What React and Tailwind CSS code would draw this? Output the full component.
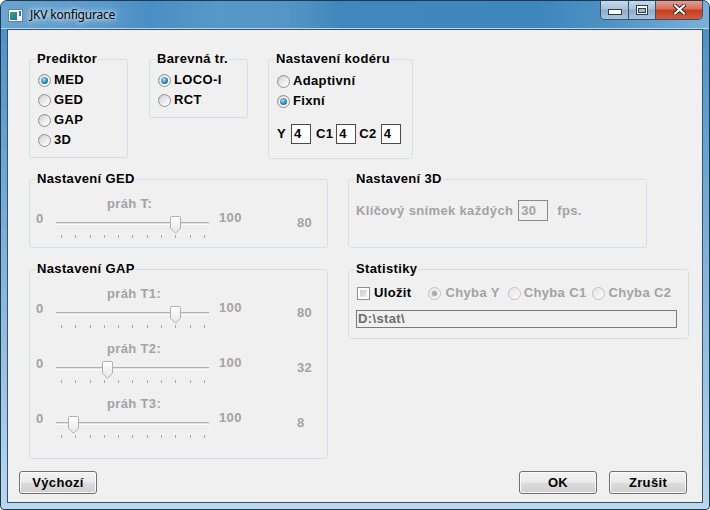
import React from "react";

const grayText = "text-[#a3a3a3]";

function Radio({ checked, disabled }) {
  return (
    <span
      className={
        disabled
          ? "flex h-[13px] w-[13px] shrink-0 items-center justify-center rounded-full border border-[#c2c2c2] bg-[linear-gradient(135deg,#e6e6e6,#fbfbfb)]"
          : "flex h-[13px] w-[13px] shrink-0 items-center justify-center rounded-full border border-[#8e8f8f] bg-[linear-gradient(135deg,#cdcdcd,#f3f3f3_65%,#ffffff)]"
      }
    >
      {checked && (
        <span
          className={
            disabled
              ? "h-[5px] w-[5px] rounded-full bg-[#a9a9a9] shadow-[0_0_0_1px_#e2e2e2]"
              : "h-[7px] w-[7px] rounded-full bg-[radial-gradient(circle_at_40%_35%,#a6e0fa,#2a86c4_55%,#0e4f82)] shadow-[0_0_0_1px_#ffffff]"
          }
        />
      )}
    </span>
  );
}

function RadioRow({ label, checked }) {
  return (
    <div className="flex h-[20px] items-center gap-[3px]">
      <Radio checked={checked} />
      <span className="text-[13px] font-bold leading-[16px]">{label}</span>
    </div>
  );
}

function Group({ title, className, children }) {
  return (
    <fieldset className={"rounded-[3px] border border-[#d5dfe5] pl-[6px] " + className}>
      <legend className="px-[1px] text-[13px] font-bold leading-[16px] text-black">{title}</legend>
      {children}
    </fieldset>
  );
}

function Thumb() {
  return (
    <svg width="11" height="18" viewBox="0 0 11 18">
      <defs>
        <linearGradient id="thumbFill" x1="0" y1="0" x2="0" y2="1">
          <stop offset="0" stopColor="#ffffff" />
          <stop offset="1" stopColor="#e6e6e6" />
        </linearGradient>
      </defs>
      <path
        d="M1.8,0.5 H9.2 Q10.5,0.5 10.5,1.8 V12.3 L5.5,17.3 L0.5,12.3 V1.8 Q0.5,0.5 1.8,0.5 Z"
        fill="url(#thumbFill)"
        stroke="#b1b1b1"
      />
    </svg>
  );
}

function Slider({ label, value }) {
  const ticks = Array.from({ length: 11 }, (_, i) => i);
  return (
    <div className={"h-[55px] text-[13px] font-bold " + grayText}>
      <div className="pl-[71px] leading-[14px]">{label}</div>
      <div className="flex items-start">
        <span className="mt-[1px] w-[20px] leading-[13px]">0</span>
        <div className="relative h-[28px] w-[153px]">
          <div className="mt-[11px] h-[3px] border-y border-t-[#b0b0b0] border-b-[#fbfbfb] bg-[#e2e2e2]" />
          <div className="mt-[10px] flex h-[3px] justify-between pl-[5px] pr-[4px]">
            {ticks.map((t) => (
              <span key={t} className="h-[3px] w-[1px] bg-[#a8a8a8]" />
            ))}
          </div>
          <div className="absolute top-[5px]" style={{ left: Math.round(0.2 + 1.426 * value) }}>
            <Thumb />
          </div>
        </div>
        <span className="ml-[10px] w-[78px] leading-[13px]">100</span>
        <span className="mt-[5px] leading-[13px]">{value}</span>
      </div>
    </div>
  );
}

function Button({ children, className = "" }) {
  return (
    <button
      type="button"
      className={
        "h-[23px] w-[78px] rounded-[3px] border border-[#707070] bg-[linear-gradient(#f2f2f2_0%,#ebebeb_48%,#dddddd_52%,#cfcfcf_100%)] text-[13px] font-bold leading-[16px] text-black shadow-[inset_0_0_0_1px_#fbfbfb] " +
        className
      }
    >
      {children}
    </button>
  );
}

function SmallBox({ value }) {
  return (
    <span className="flex h-[20px] w-[20px] items-center border border-[#4b4b4b] bg-white pl-[2px] text-[13px] font-bold leading-[16px]">
      {value}
    </span>
  );
}

function WindowButtons() {
  return (
    <div className="-mt-[1px] mr-[6px] ml-auto flex h-[20px] overflow-hidden rounded-b-[5px] border border-t-0 border-[#3a5268]">
      <div className="flex w-[28px] items-center justify-center border-r border-[#3a5268] bg-[linear-gradient(#c9dcec_0%,#aac4dc_45%,#8cacca_55%,#a7c5df_100%)]">
        <svg width="14" height="6" viewBox="0 0 14 6" className="mt-[5px]">
          <rect x="0.5" y="0.5" width="13" height="5" fill="#ffffff" stroke="#2c3e50" />
        </svg>
      </div>
      <div className="flex w-[27px] items-center justify-center border-r border-[#3a5268] bg-[linear-gradient(#c9dcec_0%,#aac4dc_45%,#8cacca_55%,#a7c5df_100%)]">
        <svg width="12" height="10" viewBox="0 0 12 10">
          <rect x="0.5" y="0.5" width="11" height="9" fill="#ffffff" stroke="#2c3e50" />
          <rect x="2.5" y="3.5" width="7" height="4" fill="#9cb9d3" stroke="#2c3e50" />
        </svg>
      </div>
      <div className="flex w-[46px] items-center justify-center bg-[linear-gradient(#e8a493_0%,#d8705a_45%,#c6401f_55%,#d45a3c_100%)]">
        <svg width="13" height="11" viewBox="0 0 13 11">
          <path d="M2,1.5 L11,9.5 M11,1.5 L2,9.5" stroke="#3a2a2a" strokeWidth="4" strokeLinecap="square" />
          <path d="M2,1.5 L11,9.5 M11,1.5 L2,9.5" stroke="#ffffff" strokeWidth="2" strokeLinecap="square" />
        </svg>
      </div>
    </div>
  );
}

function AppIcon() {
  return (
    <svg width="15" height="13" viewBox="0 0 15 13" className="mt-[8px] ml-[7px] shrink-0">
      <defs>
        <linearGradient id="iconFill" x1="0" y1="0" x2="1" y2="1">
          <stop offset="0" stopColor="#3aa56a" />
          <stop offset="1" stopColor="#1f6fb0" />
        </linearGradient>
      </defs>
      <rect x="0.5" y="0.5" width="14" height="12" fill="#f4f4f4" stroke="#6f7f8e" />
      <rect x="2" y="3" width="7" height="8" fill="url(#iconFill)" />
      <rect x="11" y="2" width="2" height="5" fill="#2d73c4" />
    </svg>
  );
}

export default function App() {
  return (
    <div className="h-[510px] w-[710px] overflow-hidden rounded-t-[7px] rounded-b-[4px] border border-[#1f3a50] bg-[linear-gradient(#4a8ec2_0%,#6aa4d2_30%,#9cc3e3_75%,#bcd7ee_100%)] font-['Liberation_Sans',Arial,sans-serif] tracking-[0.35px] text-black">
      {/* title bar */}
      <div className="flex h-[28px] items-start bg-[linear-gradient(90deg,#6aa4d0_0%,#5b9acb_14%,#4a8fc3_21%,#5698c7_30%,#5596c6_40%,#4187bc_48%,#3f86bb_76%,#4f92c4_86%,#79b1da_100%)] shadow-[inset_0_-1px_0_#bcd6ea]">
        <AppIcon />
        <span className="mt-[6px] ml-[7px] font-['Noto_Sans',sans-serif] text-[12px] leading-[16px] tracking-[-0.2px] [text-shadow:0_0_8px_#ffffff,0_0_4px_#ffffff]">
          JKV konfigurace
        </span>
        <WindowButtons />
      </div>

      {/* client area */}
      <div className="ml-[6px] flex h-[474px] w-[696px] flex-col border border-[#34536b] bg-[#f0f0f0]">
        <div className="flex items-start pt-[21px] pl-[21px]">
          <Group title="Prediktor" className="h-[107px] w-[99px]">
            <div className="ml-[2px] pt-[3px]">
              <RadioRow label="MED" checked />
              <RadioRow label="GED" />
              <RadioRow label="GAP" />
              <RadioRow label="3D" />
            </div>
          </Group>
          <Group title="Barevná tr." className="ml-[21px] h-[67px] w-[99px]">
            <div className="ml-[2px] pt-[3px]">
              <RadioRow label="LOCO-I" checked />
              <RadioRow label="RCT" />
            </div>
          </Group>
          <Group title="Nastavení kodéru" className="ml-[20px] h-[108px] w-[145px]">
            <div className="ml-[2px] pt-[4px]">
              <RadioRow label="Adaptivní" />
              <RadioRow label="Fixní" checked />
              <div className="mt-[13px] flex items-center text-[13px] font-bold leading-[16px]">
                <span>Y</span>
                <span className="ml-[5px]">
                  <SmallBox value="4" />
                </span>
                <span className="ml-[5px]">C1</span>
                <span className="ml-[3px]">
                  <SmallBox value="4" />
                </span>
                <span className="ml-[3px]">C2</span>
                <span className="ml-[4px]">
                  <SmallBox value="4" />
                </span>
              </div>
            </div>
          </Group>
        </div>

        <div className="mt-[12px] flex items-start pl-[21px]">
          <div className="flex w-[299px] flex-col gap-[13px]">
            <Group title="Nastavení GED" className="h-[77px] w-[299px]">
              <div className="pt-[10px]">
                <Slider label="práh T:" value={80} />
              </div>
            </Group>
            <Group title="Nastavení GAP" className="h-[198px] w-[299px]">
              <div className="pt-[10px]">
                <Slider label="práh T1:" value={80} />
                <Slider label="práh T2:" value={32} />
                <Slider label="práh T3:" value={8} />
              </div>
            </Group>
          </div>

          <div className="ml-[20px] flex flex-col gap-[13px]">
            <Group title="Nastavení 3D" className="h-[77px] w-[299px]">
              <div className={"ml-[1px] flex items-center pt-[13px] text-[13px] font-bold leading-[16px] " + grayText}>
                <span>Klíčový snímek každých</span>
                <span className="ml-[5px] flex h-[21px] w-[30px] items-center border border-[#8a8a8a] pl-[2px]">30</span>
                <span className="ml-[9px]">fps.</span>
              </div>
            </Group>
            <Group title="Statistiky" className="h-[78px] w-[341px]">
              <div className="ml-[2px] flex items-center pt-[8px] text-[13px] font-bold leading-[16px]">
                <span className="h-[13px] w-[13px] shrink-0 border border-[#8e8f8f] bg-white p-[2px]">
                  <span className="block h-full w-full bg-[linear-gradient(135deg,#c8c8c8,#f2f2f2)]" />
                </span>
                <span className="ml-[4px]">Uložit</span>
                <span className="ml-[17px]">
                  <Radio checked disabled />
                </span>
                <span className={"ml-[4px] " + grayText}>Chyba Y</span>
                <span className="ml-[8px]">
                  <Radio disabled />
                </span>
                <span className={"ml-[3px] " + grayText}>Chyba C1</span>
                <span className="ml-[6px]">
                  <Radio disabled />
                </span>
                <span className={"ml-[3px] " + grayText}>Chyba C2</span>
              </div>
              <div className="mt-[9px] ml-[1px] flex h-[18px] w-[321px] items-center border border-[#7a7a7a] pl-[1px] text-[13px] font-bold leading-[16px] text-[#6d6d6d]">
                D:\stat\
              </div>
            </Group>
          </div>
        </div>

        <div className="mt-[12px] flex pr-[15px] pl-[11px]">
          <Button>Výchozí</Button>
          <Button className="ml-auto">OK</Button>
          <Button className="ml-[12px]">Zrušit</Button>
        </div>
      </div>
    </div>
  );
}
